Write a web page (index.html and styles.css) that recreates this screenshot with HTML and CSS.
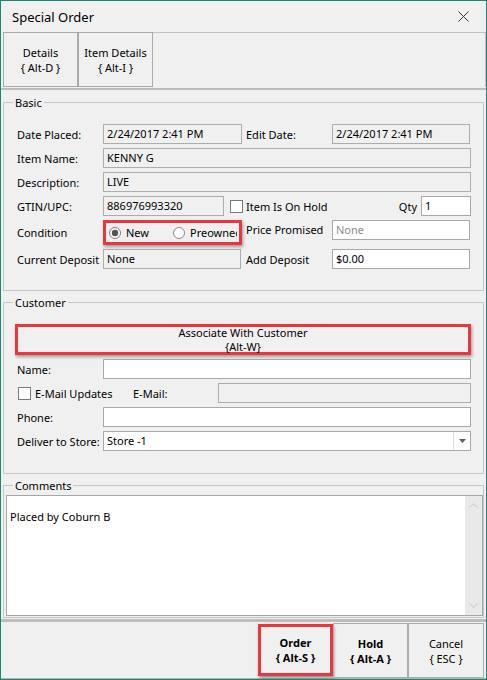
FILE: index.html
```html
<!DOCTYPE html>
<html>
<head>
<meta charset="utf-8">
<title>Special Order</title>
<link rel="stylesheet" href="styles.css">
</head>
<body>
<div class="win">
  <div class="titlebar">
    <span class="title">Special Order</span>
    <svg class="close" width="11" height="11" viewBox="0 0 11 11"><path d="M0.5 0.5L10.5 10.5M10.5 0.5L0.5 10.5" stroke="#333" stroke-width="1" fill="none"/></svg>
  </div>
  <div class="tabs">
    <div class="tab"><span>Details</span><span>{ Alt-D }</span></div>
    <div class="tab"><span>Item Details</span><span>{ Alt-I }</span></div>
    <div class="tabfill"></div>
  </div>
  <div class="sep"></div>

  <div class="group g-basic">
    <div class="gtitle">Basic</div>
    <div class="gbody">
      <div class="row">
        <span class="lbl">Date Placed:</span>
        <span class="fld w139">2/24/2017 2:41 PM</span>
        <span class="lbl lbl2">Edit Date:</span>
        <span class="fld w138">2/24/2017 2:41 PM</span>
      </div>
      <div class="row">
        <span class="lbl">Item Name:</span>
        <span class="fld grow">KENNY G</span>
      </div>
      <div class="row">
        <span class="lbl">Description:</span>
        <span class="fld grow">LIVE</span>
      </div>
      <div class="row">
        <span class="lbl">GTIN/UPC:</span>
        <span class="fld w121">886976993320</span>
        <span class="chk chk-hold"></span>
        <span class="chk-text">Item Is On Hold</span>
        <span class="qty">Qty</span>
        <span class="fld white w50">1</span>
      </div>
      <div class="row row-cond">
        <span class="lbl lbl-cond">Condition</span>
        <div class="radios">
          <span class="radio r-new">
            <svg width="12" height="12" viewBox="0 0 12 12"><circle cx="6" cy="6" r="5.5" fill="#fff" stroke="#7c7c7c"/><circle cx="6" cy="6" r="3.2" fill="#555"/></svg>
            <span>New</span>
          </span>
          <span class="radio r-pre">
            <svg width="12" height="12" viewBox="0 0 12 12"><circle cx="6" cy="6" r="5.5" fill="#fff" stroke="#8a8a8a"/></svg>
            <span class="r-pre-text">Preowned</span>
          </span>
        </div>
        <span class="lbl lbl2 lbl-top">Price Promised</span>
        <span class="fld white w138 muted">None</span>
      </div>
      <div class="row">
        <span class="lbl">Current Deposit</span>
        <span class="fld w138">None</span>
        <span class="lbl lbl2 lbl2b">Add Deposit</span>
        <span class="fld white w138">$0.00</span>
      </div>
    </div>
  </div>

  <div class="group g-cust">
    <div class="gtitle">Customer</div>
    <div class="gbody">
      <div class="assoc"><span>Associate With Customer</span><span>{Alt-W}</span></div>
      <div class="row">
        <span class="lbl">Name:</span>
        <span class="fld white grow"></span>
      </div>
      <div class="row">
        <span class="chkwrap"><span class="chk"></span><span class="chk-text">E-Mail Updates</span></span>
        <span class="lbl lbl-email">E-Mail:</span>
        <span class="fld grow"></span>
      </div>
      <div class="row">
        <span class="lbl">Phone:</span>
        <span class="fld white grow"></span>
      </div>
      <div class="row">
        <span class="lbl">Deliver to Store:</span>
        <div class="fld white grow combo">
          <span class="combo-text">Store -1</span>
          <span class="ddbtn"><svg width="7" height="4" viewBox="0 0 7 4"><path d="M0 0H7L3.5 4Z" fill="#606060"/></svg></span>
        </div>
      </div>
    </div>
  </div>

  <div class="group g-comm">
    <div class="gtitle">Comments</div>
    <div class="gbody gbody-comm">
      <div class="memo">
        <div class="memo-text">Placed by Coburn B</div>
        <div class="vscroll">
          <svg width="9" height="5" viewBox="0 0 9 5"><path d="M0.5 4.5L4.5 0.8L8.5 4.5" stroke="#c2c2c2" fill="none"/></svg>
          <svg width="9" height="5" viewBox="0 0 9 5"><path d="M0.5 0.5L4.5 4.2L8.5 0.5" stroke="#c2c2c2" fill="none"/></svg>
        </div>
      </div>
    </div>
  </div>

  <div class="sep sep2"></div>
  <div class="bar">
    <div class="btn bold btn-order"><span>Order</span><span>{ Alt-S }</span></div>
    <div class="btn bold"><span>Hold</span><span>{ Alt-A }</span></div>
    <div class="btn btn-cancel"><span>Cancel</span><span>{ ESC }</span></div>
  </div>
</div>
</body>
</html>
```

FILE: styles.css
```css
* { box-sizing: border-box; }

body {
  margin: 0;
  background: #ffffff;
  font-family: "Noto Sans", "Open Sans", sans-serif;
  font-size: 11px;
  color: #000;
}

.win {
  width: 487px;
  height: 680px;
  border: 1px solid #1a8775;
  background: #f0f0f0;
  display: flex;
  flex-direction: column;
  overflow: hidden;
}

.titlebar {
  height: 31px;
  flex: none;
  display: flex;
  align-items: center;
  justify-content: space-between;
  padding: 0 17px 0 11px;
}

.title {
  font-size: 13px;
  color: #000;
}

.close { display: block; }

.tabs {
  display: flex;
  height: 55px;
  margin-left: 2px;
  flex: none;
}

.tab {
  width: 75px;
  border: 1px solid #a9a9a9;
  display: flex;
  flex-direction: column;
  align-items: center;
  justify-content: center;
  line-height: 15px;
}

.tabfill {
  flex: 1;
  border-top: 1px solid #c2c2c2;
  border-right: 1px solid #c2c2c2;
}

.sep {
  height: 2px;
  margin-top: 1px;
  background: #bdbdbd;
  flex: none;
}

.sep2 { height: 3px; }

.group {
  margin: 11px 2px 0;
  border: 1px solid #c6c6c6;
  flex: none;
}

.g-basic { margin-top: 12px; }

.gtitle {
  margin: -8px 0 0 9px;
  padding: 0 2px;
  background: #f0f0f0;
  line-height: 15px;
  width: max-content;
}

.gbody {
  padding: 14px 12px 21px 13px;
  display: flex;
  flex-direction: column;
  gap: 4px;
}

.g-cust .gbody { padding-bottom: 22px; }

.gbody-comm {
  padding: 2px 0 1px 1px;
}

.row {
  display: flex;
  align-items: center;
  height: 20px;
}

.lbl {
  width: 86px;
  flex: none;
  white-space: nowrap;
}

.lbl2 { margin-left: 4px; }
.lbl2b { margin-left: 5px; }

.fld {
  height: 20px;
  flex: none;
  border: 1px solid #adadad;
  background: #f0f0f0;
  padding: 0 4px 0 3px;
  line-height: 18px;
  white-space: nowrap;
  overflow: hidden;
}

.fld.white {
  background: #ffffff;
  border-color: #a8a8a8;
}

.fld.muted { color: #8d8d8d; }

.w139 { width: 139px; }
.w138 { width: 138px; }
.w121 { width: 121px; }
.w50 { width: 50px; }
.grow { flex: 1; }

.chk {
  width: 13px;
  height: 13px;
  flex: none;
  border: 1px solid #7a7a7a;
  background: #ffffff;
}

.chk-hold { margin-left: 6px; }

.chk-text {
  margin-left: 3px;
  white-space: nowrap;
}

.qty {
  margin-left: auto;
  margin-right: 4px;
}

.row-cond {
  height: 25px;
  align-items: flex-start;
}

.lbl-cond { line-height: 25px; }
.lbl-top { line-height: 20px; }

.radios {
  width: 139px;
  height: 25px;
  flex: none;
  border: 3px solid #e9363f;
  box-shadow: 1px 2px 3px rgba(0, 0, 0, 0.35);
  display: flex;
  align-items: center;
  padding: 0 2px 0 3px;
  overflow: hidden;
}

.radio {
  display: flex;
  align-items: center;
  gap: 5px;
  white-space: nowrap;
  overflow: hidden;
}

.radio svg { flex: none; display: block; }

.r-new { width: 64px; flex: none; }
.r-pre { flex: 1; min-width: 0; }
.r-pre-text { overflow: hidden; }

.assoc {
  height: 31px;
  margin-left: -2px;
  width: calc(100% + 2px);
  border: 3px solid #e9363f;
  box-shadow: 1px 2px 3px rgba(0, 0, 0, 0.35);
  display: flex;
  flex-direction: column;
  align-items: center;
  justify-content: center;
  line-height: 14px;
}

.chkwrap {
  width: 116px;
  flex: none;
  display: flex;
  align-items: center;
  padding-left: 1px;
}

.chkwrap .chk-text { margin-left: 4px; }

.lbl-email { width: 85px; }

.combo {
  display: flex;
  padding-right: 0;
}

.combo-text { flex: 1; }

.ddbtn {
  width: 17px;
  flex: none;
  border-left: 1px solid #dcdcdc;
  display: flex;
  align-items: center;
  justify-content: center;
}

.ddbtn svg { display: block; }

.memo {
  height: 121px;
  margin-left: 1px;
  border: 1px solid #a6a6a6;
  background: #ffffff;
  display: flex;
}

.memo-text {
  flex: 1;
  padding: 13px 3px 0;
  line-height: 15px;
}

.vscroll {
  width: 17px;
  flex: none;
  background: #e9e9e9;
  display: flex;
  flex-direction: column;
  justify-content: space-between;
  align-items: center;
  padding: 7px 0 7px;
}

.vscroll svg { display: block; }

.bar {
  height: 57px;
  flex: none;
  border-bottom: 1px solid #b4b4b4;
  display: flex;
  justify-content: flex-end;
  align-items: flex-start;
  padding-right: 2px;
}

.btn {
  width: 75px;
  height: 55px;
  margin-top: 1px;
  border: 1px solid #adadad;
  display: flex;
  flex-direction: column;
  align-items: center;
  justify-content: center;
  line-height: 15px;
}

.btn-cancel { width: 76px; }

.bold { font-weight: 700; }

.btn-order {
  height: 52px;
  margin-top: 2px;
  border: 3px solid #e9363f;
  box-shadow: 1px 2px 3px rgba(0, 0, 0, 0.4);
}
```
